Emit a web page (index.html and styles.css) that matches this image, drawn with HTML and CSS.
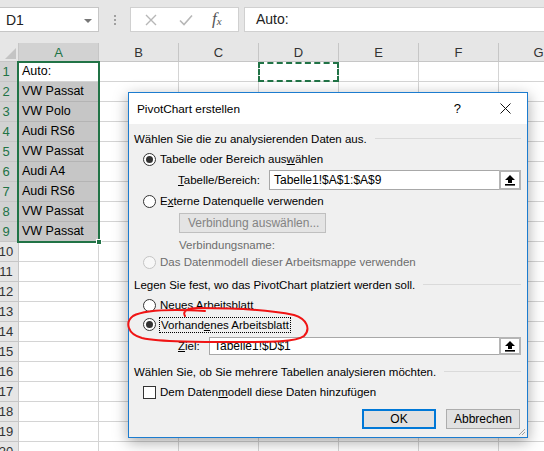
FILE: index.html
```html
<!DOCTYPE html>
<html lang="de">
<head>
<meta charset="utf-8">
<title>PivotChart erstellen</title>
<link rel="stylesheet" href="styles.css">
</head>
<body>
<div class="app">
  <div class="toolbar">
    <div class="namebox"><span>D1</span><span class="caret"></span></div>
    <div class="dots"><i></i><i></i><i></i></div>
    <div class="fbtns">
      <svg class="ic-x" width="12" height="12" viewBox="0 0 12 12"><path d="M1 1L11 11M11 1L1 11" stroke="#b7b7b7" stroke-width="1.4" fill="none"/></svg>
      <svg class="ic-ok" width="14" height="12" viewBox="0 0 14 12"><path d="M1 6.5L5 10.5L13 1.5" stroke="#b7b7b7" stroke-width="1.6" fill="none"/></svg>
      <span class="fx">f<sub>x</sub></span>
    </div>
    <div class="formula">Auto:</div>
  </div>

  <div class="sheet">
    <div class="grid">
      <div class="corner"></div>
      <div class="ch sel">A</div><div class="ch">B</div><div class="ch">C</div><div class="ch">D</div><div class="ch">E</div><div class="ch">F</div><div class="ch">G</div>

      <div class="rh sel">1</div><div class="c">Auto:</div><div class="c"></div><div class="c"></div><div class="c"></div><div class="c"></div><div class="c"></div><div class="c"></div>
      <div class="rh sel">2</div><div class="c hl">VW Passat</div><div class="c"></div><div class="c"></div><div class="c"></div><div class="c"></div><div class="c"></div><div class="c"></div>
      <div class="rh sel">3</div><div class="c hl">VW Polo</div><div class="c"></div><div class="c"></div><div class="c"></div><div class="c"></div><div class="c"></div><div class="c"></div>
      <div class="rh sel">4</div><div class="c hl">Audi RS6</div><div class="c"></div><div class="c"></div><div class="c"></div><div class="c"></div><div class="c"></div><div class="c"></div>
      <div class="rh sel">5</div><div class="c hl">VW Passat</div><div class="c"></div><div class="c"></div><div class="c"></div><div class="c"></div><div class="c"></div><div class="c"></div>
      <div class="rh sel">6</div><div class="c hl">Audi A4</div><div class="c"></div><div class="c"></div><div class="c"></div><div class="c"></div><div class="c"></div><div class="c"></div>
      <div class="rh sel">7</div><div class="c hl">Audi RS6</div><div class="c"></div><div class="c"></div><div class="c"></div><div class="c"></div><div class="c"></div><div class="c"></div>
      <div class="rh sel">8</div><div class="c hl">VW Passat</div><div class="c"></div><div class="c"></div><div class="c"></div><div class="c"></div><div class="c"></div><div class="c"></div>
      <div class="rh sel">9</div><div class="c hl">VW Passat</div><div class="c"></div><div class="c"></div><div class="c"></div><div class="c"></div><div class="c"></div><div class="c"></div>
      <div class="rh">10</div><div class="c"></div><div class="c"></div><div class="c"></div><div class="c"></div><div class="c"></div><div class="c"></div><div class="c"></div>
      <div class="rh">11</div><div class="c"></div><div class="c"></div><div class="c"></div><div class="c"></div><div class="c"></div><div class="c"></div><div class="c"></div>
      <div class="rh">12</div><div class="c"></div><div class="c"></div><div class="c"></div><div class="c"></div><div class="c"></div><div class="c"></div><div class="c"></div>
      <div class="rh">13</div><div class="c"></div><div class="c"></div><div class="c"></div><div class="c"></div><div class="c"></div><div class="c"></div><div class="c"></div>
      <div class="rh">14</div><div class="c"></div><div class="c"></div><div class="c"></div><div class="c"></div><div class="c"></div><div class="c"></div><div class="c"></div>
      <div class="rh">15</div><div class="c"></div><div class="c"></div><div class="c"></div><div class="c"></div><div class="c"></div><div class="c"></div><div class="c"></div>
      <div class="rh">16</div><div class="c"></div><div class="c"></div><div class="c"></div><div class="c"></div><div class="c"></div><div class="c"></div><div class="c"></div>
      <div class="rh">17</div><div class="c"></div><div class="c"></div><div class="c"></div><div class="c"></div><div class="c"></div><div class="c"></div><div class="c"></div>
      <div class="rh">18</div><div class="c"></div><div class="c"></div><div class="c"></div><div class="c"></div><div class="c"></div><div class="c"></div><div class="c"></div>
      <div class="rh">19</div><div class="c"></div><div class="c"></div><div class="c"></div><div class="c"></div><div class="c"></div><div class="c"></div><div class="c"></div>
      <div class="rh">20</div><div class="c"></div><div class="c"></div><div class="c"></div><div class="c"></div><div class="c"></div><div class="c"></div><div class="c"></div>
    </div>
    <div class="selection"><span class="handle"></span></div>
    <div class="ants"></div>
  </div>

  <div class="dialog">
    <div class="titlebar">
      <span class="title">PivotChart erstellen</span>
      <span class="help">?</span>
      <svg class="close" width="11" height="11" viewBox="0 0 11 11"><path d="M0.5 0.5L10.5 10.5M10.5 0.5L0.5 10.5" stroke="#111" stroke-width="1" fill="none"/></svg>
    </div>
    <div class="dbody">
      <div class="ghead h1"><span>Wählen Sie die zu analysierenden Daten aus.</span></div>
      <div class="opt o1"><span class="radio on"></span><span>Tabelle oder Bereich aus<u>w</u>ählen</span></div>
      <div class="field f1">
        <span class="flabel l1"><u>T</u>abelle/Bereich:</span>
        <div class="input"><span class="val">Tabelle1!$A$1:$A$9</span><span class="pick"><svg width="12" height="12" viewBox="0 0 12 12"><path d="M6 1L11 6H8V9H4V6H1Z" fill="#000"/><rect x="1" y="10" width="10" height="1.6" fill="#000"/></svg></span></div>
      </div>
      <div class="opt o2"><span class="radio"></span><span>E<u>x</u>terne Datenquelle verwenden</span></div>
      <div class="dis-btn">Verbindung auswählen...</div>
      <div class="conn">Verbindungsname:</div>
      <div class="opt o3 disabled"><span class="radio"></span><span>Das Datenmodell dieser Arbeitsmappe verwenden</span></div>

      <div class="ghead h2"><span>Legen Sie fest, wo das PivotChart platziert werden soll.</span></div>
      <div class="opt o4"><span class="radio"></span><span>Neues Arbeitsblatt</span></div>
      <div class="opt o5"><span class="radio on"></span><span class="focus">Vorhand<u>e</u>nes Arbeitsblatt</span></div>
      <div class="field f2">
        <span class="flabel l2"><u>Z</u>iel:</span>
        <div class="input"><span class="val">Tabelle1!$D$1</span><span class="pick"><svg width="12" height="12" viewBox="0 0 12 12"><path d="M6 1L11 6H8V9H4V6H1Z" fill="#000"/><rect x="1" y="10" width="10" height="1.6" fill="#000"/></svg></span></div>
      </div>

      <div class="ghead h3"><span>Wählen Sie, ob Sie mehrere Tabellen analysieren möchten.</span></div>
      <div class="opt o6"><span class="check"></span><span>Dem Daten<u>m</u>odell diese Daten hinzufügen</span></div>

      <div class="buttons">
        <div class="btn ok">OK</div>
        <div class="btn">Abbrechen</div>
      </div>
    </div>
    <svg class="grip" width="8" height="8" viewBox="0 0 8 8"><path d="M7 1L1 7M7 4L4 7" stroke="#a0a0a0" stroke-width="1" fill="none"/></svg>
  </div>

  <svg class="annot" width="544" height="451" viewBox="0 0 544 451">
    <path d="M185 316 C182 311 188 308 198 308 C228 308 270 310 294 315 C307 319 311 329 304 336 C296 342 270 342 240 342 C200 342 160 342 142 338 C127 334 125 322 133 316 C144 310 170 309 205 311" stroke="#f01414" stroke-width="2" fill="none" stroke-linecap="round"/>
  </svg>
</div>
</body>
</html>
```

FILE: styles.css
```css
* { box-sizing: border-box; }
html, body { margin: 0; padding: 0; }
body {
  width: 544px;
  height: 451px;
  overflow: hidden;
  background: #fff;
  font-family: "Liberation Sans", Arial, sans-serif;
  color: #000;
}
.app { position: relative; width: 544px; height: 451px; overflow: hidden; }

/* toolbar */
.toolbar {
  height: 43px;
  background: #e6e6e6;
  display: flex;
  align-items: flex-start;
  padding-top: 7px;
}
.namebox {
  width: 99px;
  height: 25px;
  background: #fff;
  border: 1px solid #c6c6c6;
  border-left: none;
  display: flex;
  align-items: center;
  padding-left: 6px;
  font-size: 14px;
  color: #222;
  position: relative;
}
.caret {
  position: absolute;
  right: 6px;
  top: 11px;
  width: 0; height: 0;
  border-left: 4px solid transparent;
  border-right: 4px solid transparent;
  border-top: 4px solid #777;
}
.dots {
  width: 31px;
  height: 25px;
  display: flex;
  flex-direction: column;
  align-items: center;
  justify-content: center;
  gap: 2px;
}
.dots i { display: block; width: 2px; height: 2px; background: #a0a0a0; }
.fbtns {
  width: 109px;
  height: 25px;
  background: #fff;
  border: 1px solid #d0d0d0;
  display: flex;
  align-items: center;
  padding-left: 14px;
}
.ic-x { margin-right: 22px; }
.ic-ok { margin-right: 19px; }
.fx {
  font-family: "Liberation Serif", serif;
  font-style: italic;
  font-size: 17px;
  color: #555;
  line-height: 1;
  margin-top: -3px;
}
.fx sub { font-size: 11px; vertical-align: -1px; }
.formula {
  margin-left: 5px;
  flex: 1;
  height: 25px;
  background: #fff;
  border: 1px solid #d0d0d0;
  border-right: none;
  padding-left: 11px;
  font-size: 14px;
  line-height: 23px;
  color: #222;
}

/* sheet */
.sheet { position: relative; }
.grid {
  display: grid;
  grid-template-columns: 19px repeat(7, 80px);
  grid-template-rows: 19px repeat(20, 20px);
}
.corner {
  background: #e6e6e6;
  border-right: 1px solid #c6c6c6;
  border-bottom: 1px solid #c6c6c6;
  position: relative;
}
.corner::after {
  content: "";
  position: absolute;
  right: 2px; bottom: 2px;
  width: 0; height: 0;
  border-left: 11px solid transparent;
  border-bottom: 11px solid #c4c4c4;
}
.ch {
  background: #e6e6e6;
  border-right: 1px solid #c6c6c6;
  border-bottom: 1px solid #c6c6c6;
  text-align: center;
  font-size: 13px;
  line-height: 19px;
  color: #333;
}
.ch.sel { background: #d2d2d2; color: #217346; }
.rh {
  background: #e6e6e6;
  border-right: 1px solid #c6c6c6;
  border-bottom: 1px solid #c6c6c6;
  padding-right: 6px;
  font-size: 13px;
  line-height: 19px;
  color: #333;
  white-space: nowrap;
  display: flex;
  justify-content: center;
}
.rh.sel { background: #d2d2d2; color: #217346; }
.c {
  border-right: 1px solid #d4d4d4;
  border-bottom: 1px solid #d4d4d4;
  font-size: 12.5px;
  line-height: 19px;
  padding-left: 3px;
  white-space: nowrap;
  overflow: hidden;
}
.c.hl { background: #c6c6c6; border-color: #b4b4b4; }

.selection {
  position: absolute;
  left: 17px;
  top: 18px;
  width: 83px;
  height: 182px;
  border: 2px solid #217346;
}
.handle {
  position: absolute;
  right: -4px;
  bottom: -4px;
  width: 6px;
  height: 6px;
  background: #217346;
  border: 1px solid #fff;
}
.ants {
  position: absolute;
  left: 258px;
  top: 19px;
  width: 81px;
  height: 20px;
  border: 2px dashed #217346;
}

/* dialog */
.dialog {
  position: absolute;
  left: 128px;
  top: 92px;
  width: 400px;
  height: 346px;
  border: 1px solid #1c7ccf;
  background: #f0f0f0;
  box-shadow: 0 4px 14px rgba(0,0,0,0.35);
  font-size: 11.5px;
  display: flex;
  flex-direction: column;
}
.titlebar {
  height: 31px;
  background: #fff;
  display: flex;
  align-items: center;
  padding-left: 8px;
}
.title { flex: 1; font-size: 11.8px; }
.help { font-size: 13px; margin-right: 39px; }
.close { margin-right: 16px; }

.dbody {
  flex: 1;
  display: flex;
  flex-direction: column;
  padding: 7px 6px 0 5px;
}
.ghead {
  display: flex;
  align-items: center;
  height: 16px;
  white-space: nowrap;
}
.ghead::after {
  content: "";
  flex: 1;
  height: 1px;
  background: #dadada;
  margin-left: 8px;
  margin-top: -2px;
}
.h2 { margin-top: 6px; }
.h3 { margin-top: 9px; }

.opt {
  display: flex;
  align-items: center;
  padding-left: 9px;
  height: 20px;
  white-space: nowrap;
}
.o1 { margin-top: 2px; }
.o2 { margin-top: 1px; }
.o3 { height: 18px; }
.o4 { margin-top: 2px; }
.o5 { height: 19px; }
.o6 { margin-top: 2px; }
.disabled { color: #6d6d6d; }
.radio {
  width: 13px;
  height: 13px;
  border: 1px solid #333;
  border-radius: 50%;
  background: #fff;
  margin-right: 4px;
  position: relative;
  flex: none;
}
.radio.on::after {
  content: "";
  position: absolute;
  left: 2px; top: 2px;
  width: 7px; height: 7px;
  border-radius: 50%;
  background: #333;
}
.disabled .radio { border-color: #c4c4c4; background: #f7f7f7; }
.check {
  width: 13px;
  height: 13px;
  border: 1px solid #333;
  background: #fff;
  margin-right: 4px;
  flex: none;
}
.focus {
  outline: 1px dotted #000;
  outline-offset: 0;
  padding: 0 1px;
  line-height: 14px;
}

.field {
  display: flex;
  align-items: center;
  padding-left: 44px;
}
.f1 { margin-top: 1px; height: 20px; }
.f2 { margin-top: 3px; height: 18px; }
.flabel.l1 { width: 91px; }
.flabel.l2 { width: 31px; }
.input {
  flex: 1;
  height: 100%;
  background: #fff;
  border: 1px solid #a8a8a8;
  display: flex;
  align-items: center;
}
.val { flex: 1; padding-left: 4px; white-space: nowrap; font-size: 12px; }
.pick {
  width: 22px;
  height: calc(100% + 2px);
  margin: -1px -1px -1px 0;
  border: 2px solid #b5b5b5;
  background: #fff;
  display: flex;
  align-items: center;
  justify-content: center;
}

.dis-btn {
  margin-top: 2px;
  margin-left: 45px;
  width: 147px;
  height: 20px;
  border: 1px solid #bfbfbf;
  background: #e4e4e4;
  color: #838383;
  display: flex;
  align-items: center;
  padding-left: 8px;
  font-size: 12px;
}
.conn {
  margin-top: 4px;
  margin-left: 45px;
  height: 16px;
  line-height: 16px;
  color: #6d6d6d;
}

.buttons {
  margin-top: 7px;
  display: flex;
  justify-content: flex-end;
  gap: 10px;
  padding-right: 1px;
}
.btn {
  width: 74px;
  height: 20px;
  border: 1px solid #adadad;
  background: #e1e1e1;
  display: flex;
  align-items: center;
  justify-content: center;
  font-size: 12px;
}
.btn.ok { border: 2px solid #0078d7; }
.grip { position: absolute; right: 1px; bottom: 1px; }

.annot { position: absolute; left: 0; top: 0; pointer-events: none; }
```
